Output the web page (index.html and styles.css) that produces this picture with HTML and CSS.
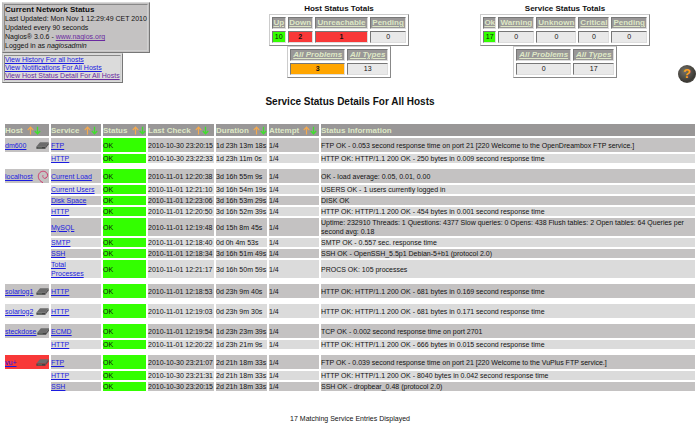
FILE: index.html
```html
<!DOCTYPE html>
<html lang="en">
<head>
  <meta charset="UTF-8">
  <meta name="viewport" content="width=device-width, initial-scale=1.0">
  <title>Current Network Status</title>
  <link rel="stylesheet" href="styles.css">
</head>
<body>
  <svg class="defs" aria-hidden="true">
    <symbol id="sort" viewBox="0 0 14 9">
      <path d="M3.5 8.5V1.5M0.8 4L3.5 1.2L6.2 4" fill="none" stroke="#f5a94e" stroke-width="1.2"/>
      <path d="M10.5 0.8V7.6M7.8 5L10.5 7.8L13.2 5" fill="none" stroke="#3fe02c" stroke-width="1.3"/>
    </symbol>
    <symbol id="box" viewBox="0 0 13 9">
      <path d="M4 1.2H12.6L9.4 5.6H0.4Z" fill="#6b6b6b"/>
      <path d="M0.4 5.6H9.4V7.8H0.4Z" fill="#424242"/>
      <path d="M12.6 1.2V3.6L9.4 7.8V5.6Z" fill="#555"/>
      <path d="M1.5 6.8H6" stroke="#8a9a8a" stroke-width="0.5"/>
    </symbol>
    <symbol id="debian" viewBox="0 0 12 13">
      <path d="M7.6 8.4C9.8 8.2 11.2 6 10.3 3.9C9.3 1.4 6 0.5 3.6 2C1.1 3.6 0.7 7 2.1 9.3C3 10.9 4.5 12 6 12.6" fill="none" stroke="#cf3468" stroke-width="1"/>
      <path d="M7.6 8.4C5.8 8 5.2 6.2 6.2 5" fill="none" stroke="#cf3468" stroke-width="0.7"/>
    </symbol>
  </svg>

  <header class="top">
    <div class="side">
      <div class="box info">
        <div class="box-inner">
          <h1>Current Network Status</h1>
          Last Updated: Mon Nov 1 12:29:49 CET 2010<br>
          Updated every 90 seconds<br>
          Nagios® 3.0.6 - <a class="visited" href="#">www.nagios.org</a><br>
          Logged in as <i>nagiosadmin</i>
        </div>
      </div>
      <nav class="box views">
        <div class="box-inner">
          <a href="#">View History For all hosts</a><br>
          <a href="#">View Notifications For All Hosts</a><br>
          <a class="visited" href="#">View Host Status Detail For All Hosts</a>
        </div>
      </nav>
    </div>

    <section class="totals">
      <h2>Host Status Totals</h2>
      <table class="host-totals">
        <tr><th><a href="#">Up</a></th><th><a href="#">Down</a></th><th><a href="#">Unreachable</a></th><th><a href="#">Pending</a></th></tr>
        <tr><td class="ok">10</td><td class="bad">2</td><td class="bad">1</td><td>0</td></tr>
      </table>
      <table class="all">
        <tr><th><a href="#">All Problems</a></th><th><a href="#">All Types</a></th></tr>
        <tr><td class="problem">3</td><td>13</td></tr>
      </table>
    </section>

    <section class="totals">
      <h2>Service Status Totals</h2>
      <table class="service-totals">
        <tr><th><a href="#">Ok</a></th><th><a href="#">Warning</a></th><th><a href="#">Unknown</a></th><th><a href="#">Critical</a></th><th><a href="#">Pending</a></th></tr>
        <tr><td class="ok">17</td><td>0</td><td>0</td><td>0</td><td>0</td></tr>
      </table>
      <table class="all">
        <tr><th><a href="#">All Problems</a></th><th><a href="#">All Types</a></th></tr>
        <tr><td>0</td><td>17</td></tr>
      </table>
    </section>

    <a class="help" href="#" title="Help">?</a>
  </header>

  <main>
    <h2 class="title">Service Status Details For All Hosts</h2>
    <table class="status">
      <colgroup>
        <col class="c-host"><col class="c-service"><col class="c-status"><col class="c-check"><col class="c-duration"><col class="c-attempt"><col>
      </colgroup>
      <thead>
        <tr>
          <th>Host <a href="#" aria-label="Sort by host"><svg><use href="#sort"/></svg></a></th>
          <th>Service <a href="#" aria-label="Sort by service"><svg><use href="#sort"/></svg></a></th>
          <th>Status <a href="#" aria-label="Sort by status"><svg><use href="#sort"/></svg></a></th>
          <th>Last Check <a href="#" aria-label="Sort by last check"><svg><use href="#sort"/></svg></a></th>
          <th>Duration <a href="#" aria-label="Sort by duration"><svg><use href="#sort"/></svg></a></th>
          <th>Attempt <a href="#" aria-label="Sort by attempt"><svg><use href="#sort"/></svg></a></th>
          <th>Status Information</th>
        </tr>
      </thead>
      <tbody>
        <tr class="odd first"><td><div class="host"><a href="#">dm600</a><svg><use href="#box"/></svg></div></td><td><a href="#">FTP</a></td><td class="ok">OK</td><td>2010-10-30 23:20:15</td><td>1d 23h 13m 18s</td><td>1/4</td><td>FTP OK - 0.053 second response time on port 21 [220 Welcome to the OpenDreambox FTP service.]</td></tr>
        <tr class="even"><td class="none"></td><td><a href="#">HTTP</a></td><td class="ok">OK</td><td>2010-10-30 23:22:33</td><td>1d 23h 11m 0s</td><td>1/4</td><td>HTTP OK: HTTP/1.1 200 OK - 250 bytes in 0.009 second response time</td></tr>
        <tr class="gap"><td colspan="7"></td></tr>

        <tr class="odd first"><td><div class="host"><a href="#">localhost</a><svg class="swirl"><use href="#debian"/></svg></div></td><td><a href="#">Current Load</a></td><td class="ok">OK</td><td>2010-11-01 12:20:38</td><td>3d 16h 55m 9s</td><td>1/4</td><td>OK - load average: 0.05, 0.01, 0.00</td></tr>
        <tr class="even"><td class="none"></td><td><a href="#">Current Users</a></td><td class="ok">OK</td><td>2010-11-01 12:21:10</td><td>3d 16h 54m 19s</td><td>1/4</td><td>USERS OK - 1 users currently logged in</td></tr>
        <tr class="odd"><td class="none"></td><td><a href="#">Disk Space</a></td><td class="ok">OK</td><td>2010-11-01 12:23:06</td><td>3d 16h 53m 29s</td><td>1/4</td><td>DISK OK</td></tr>
        <tr class="even"><td class="none"></td><td><a href="#">HTTP</a></td><td class="ok">OK</td><td>2010-11-01 12:20:50</td><td>3d 16h 52m 39s</td><td>1/4</td><td>HTTP OK: HTTP/1.1 200 OK - 454 bytes in 0.001 second response time</td></tr>
        <tr class="odd"><td class="none"></td><td><a href="#">MySQL</a></td><td class="ok">OK</td><td>2010-11-01 12:19:48</td><td>0d 15h 8m 45s</td><td>1/4</td><td>Uptime: 232910 Threads: 1 Questions: 4377 Slow queries: 0 Opens: 438 Flush tables: 2 Open tables: 64 Queries per second avg: 0.18</td></tr>
        <tr class="even"><td class="none"></td><td><a href="#">SMTP</a></td><td class="ok">OK</td><td>2010-11-01 12:18:40</td><td>0d 0h 4m 53s</td><td>1/4</td><td>SMTP OK - 0.557 sec. response time</td></tr>
        <tr class="odd"><td class="none"></td><td><a href="#">SSH</a></td><td class="ok">OK</td><td>2010-11-01 12:18:34</td><td>3d 16h 51m 49s</td><td>1/4</td><td>SSH OK - OpenSSH_5.5p1 Debian-5+b1 (protocol 2.0)</td></tr>
        <tr class="even"><td class="none"></td><td><a href="#">Total<br>Processes</a></td><td class="ok">OK</td><td>2010-11-01 12:21:17</td><td>3d 16h 50m 59s</td><td>1/4</td><td>PROCS OK: 105 processes</td></tr>
        <tr class="gap"><td colspan="7"></td></tr>

        <tr class="odd first"><td><div class="host"><a href="#">solarlog1</a><svg><use href="#box"/></svg></div></td><td><a href="#">HTTP</a></td><td class="ok">OK</td><td>2010-11-01 12:18:53</td><td>0d 23h 9m 40s</td><td>1/4</td><td>HTTP OK: HTTP/1.1 200 OK - 681 bytes in 0.169 second response time</td></tr>
        <tr class="gap"><td colspan="7"></td></tr>

        <tr class="even first"><td><div class="host"><a href="#">solarlog2</a><svg><use href="#box"/></svg></div></td><td><a href="#">HTTP</a></td><td class="ok">OK</td><td>2010-11-01 12:19:03</td><td>0d 23h 9m 30s</td><td>1/4</td><td>HTTP OK: HTTP/1.1 200 OK - 681 bytes in 0.171 second response time</td></tr>
        <tr class="gap"><td colspan="7"></td></tr>

        <tr class="odd first"><td><div class="host"><a href="#">steckdose</a><svg><use href="#box"/></svg></div></td><td><a href="#">ECMD</a></td><td class="ok">OK</td><td>2010-11-01 12:19:54</td><td>1d 23h 23m 39s</td><td>1/4</td><td>TCP OK - 0.002 second response time on port 2701</td></tr>
        <tr class="even"><td class="none"></td><td><a href="#">HTTP</a></td><td class="ok">OK</td><td>2010-11-01 12:20:22</td><td>1d 23h 21m 9s</td><td>1/4</td><td>HTTP OK: HTTP/1.1 200 OK - 666 bytes in 0.015 second response time</td></tr>
        <tr class="gap"><td colspan="7"></td></tr>

        <tr class="odd first"><td class="down"><div class="host"><a href="#">vu+</a><svg><use href="#box"/></svg></div></td><td><a href="#">FTP</a></td><td class="ok">OK</td><td>2010-10-30 23:21:07</td><td>2d 21h 18m 33s</td><td>1/4</td><td>FTP OK - 0.039 second response time on port 21 [220 Welcome to the VuPlus FTP service.]</td></tr>
        <tr class="even"><td class="none"></td><td><a href="#">HTTP</a></td><td class="ok">OK</td><td>2010-10-30 23:21:31</td><td>2d 21h 18m 33s</td><td>1/4</td><td>HTTP OK: HTTP/1.1 200 OK - 8040 bytes in 0.042 second response time</td></tr>
        <tr class="odd"><td class="none"></td><td><a href="#">SSH</a></td><td class="ok">OK</td><td>2010-10-30 23:20:15</td><td>2d 21h 18m 33s</td><td>1/4</td><td>SSH OK - dropbear_0.48 (protocol 2.0)</td></tr>
      </tbody>
    </table>
    <p class="matches">17 Matching Service Entries Displayed</p>
  </main>
</body>
</html>
```
FILE: styles.css
```css
body {
  margin: 0;
  background-color: #fff;
  color: #111;
  font-family: "Liberation Sans", Arial, sans-serif;
  font-size: 7px;
  line-height: 9px;
}
a {
  color: #1c1ce0;
}
a.visited {
  color: #6a2aa0;
}
.defs {
  display: none;
}
h1, h2 {
  margin: 0;
  font-size: 8px;
}

/* top area */
.top {
  display: grid;
  grid-template-columns: 1fr 1fr 1fr 19px;
  padding-right: 3px;
}
.side {
  display: flex;
  flex-direction: column;
  align-items: flex-start;
  padding: 2px 0 0 2px;
}
.box {
  border: 1px solid;
  border-color: #d8d8d8 #777 #777 #bbb;
  white-space: nowrap;
}
.box-inner {
  margin: 1px;
  border: 1px solid;
  border-color: #888 #d0d0d0 #d0d0d0 #888;
}
.info {
  background-color: #c4c2c2;
}
.views {
  background-color: #dbdbdb;
  line-height: 8px;
}
.totals {
  display: flex;
  flex-direction: column;
  align-items: center;
  padding-top: 4px;
}
.totals h2 {
  line-height: 10px;
}
.totals table {
  border: 1px solid;
  border-color: #ccc #888 #888 #ccc;
  border-spacing: 2px;
  line-height: 10px;
  text-align: center;
}
.host-totals {
  width: 140px;
}
.service-totals {
  width: 170px;
}
.totals .all {
  width: 104px;
}
.totals th, .totals td {
  padding: 0;
  border: 1px solid;
  border-color: #777 #ddd #ddd #777;
}
.totals th {
  background-color: #999797;
  font-size: 8px;
}
.totals th a {
  color: #dee7c6;
}
.all th {
  font-style: italic;
}
.totals td {
  background-color: #e9e9e9;
}
.totals .ok, .status .ok {
  background-color: #33ff00;
}
.totals .bad {
  background-color: #f83838;
  font-weight: bold;
}
.totals .problem {
  background-color: #ffa500;
  font-weight: bold;
}
.help {
  align-self: end;
  width: 18px;
  height: 18px;
  border-radius: 50%;
  background: radial-gradient(circle at 40% 35%, #77736b, #3a3833 65%, #8a8882);
  color: #ffa01e;
  font-size: 13px;
  font-weight: bold;
  line-height: 18px;
  text-align: center;
  text-decoration: none;
}

/* service list */
main {
  padding: 13px 3px 0;
}
.title {
  margin-bottom: 14px;
  font-size: 10px;
  line-height: 12px;
  text-align: center;
}
.status {
  width: 100%;
  table-layout: fixed;
  border-spacing: 2px;
}
.c-host { width: 44px; }
.c-service { width: 50px; }
.c-status { width: 43px; }
.c-check { width: 66px; }
.c-duration { width: 51px; }
.c-attempt { width: 50px; }
.status th {
  height: 12px;
  padding: 0;
  background-color: #999797;
  color: #dee7c6;
  font-size: 8px;
  text-align: left;
  white-space: nowrap;
}
.status th svg {
  width: 14px;
  height: 9px;
  margin-left: 2px;
  vertical-align: top;
}
.status td {
  height: 9px;
  padding: 0;
}
.status .first td {
  height: 14px;
}
.odd td {
  background-color: #c4c2c2;
}
.even td {
  background-color: #dbdbdb;
}
.status .gap td {
  height: 2px;
}
.status .none {
  background: none;
}
.status .down {
  background-color: #f83838;
}
.host {
  display: flex;
  align-items: center;
  justify-content: space-between;
}
.host svg {
  width: 13px;
  height: 9px;
}
.host .swirl {
  width: 12px;
  height: 13px;
}
.matches {
  margin: 21px 0 0;
  text-align: center;
}
```
